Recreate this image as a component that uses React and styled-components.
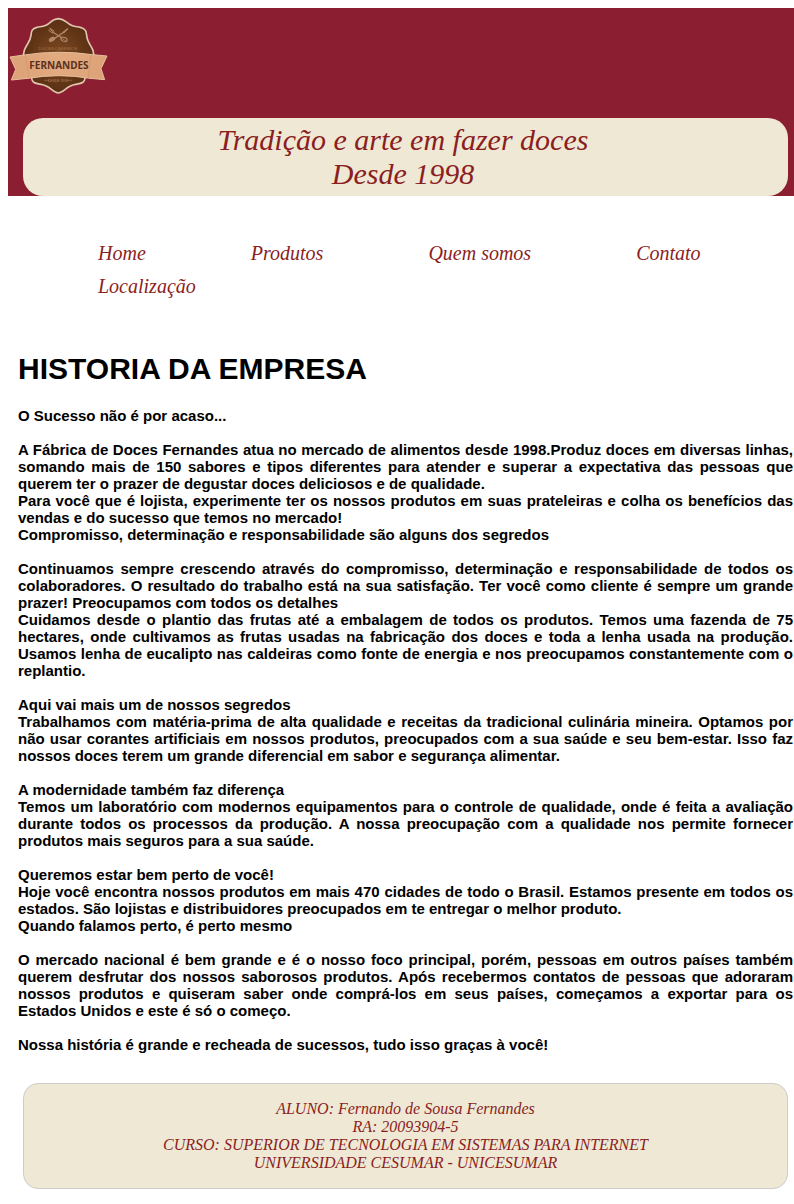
import React from "react";
import styled, { createGlobalStyle } from "styled-components";

const GlobalStyle = createGlobalStyle`
  body {
    margin: 8px 0 15px 8px;
    background: #ffffff;
    color: #000000;
    font-family: Arial, "Liberation Sans", sans-serif;
  }
`;

const serif = `"Times New Roman", "Liberation Serif", serif`;

const Header = styled.header`
  background: #8b1e30;
`;

const LogoImage = styled.svg`
  display: block;
  width: 100px;
  height: 100px;
  margin-bottom: 10px;
`;

const Tagline = styled.p`
  margin: 0 6px 0 15px;
  padding: 5px 10px 5px 5px;
  border-radius: 20px;
  background: #efe8d5;
  color: #8b1e1e;
  font: italic 30px/34px ${serif};
  text-align: center;
`;

const Menu = styled.nav`
  display: flex;
  flex-wrap: wrap;
  column-gap: 105px;
  padding: 41px 0 49px 90px;
`;

const MenuLink = styled.a`
  color: #8b1e1e;
  font: italic 20px/33px ${serif};
  text-decoration: none;
`;

const Main = styled.main`
  margin: 0 1px 30px 10px;
`;

const Title = styled.h1`
  margin: 0 0 21px;
  font-size: 30px;
  line-height: 34px;
`;

const Block = styled.p`
  margin: 0 0 17px;
  font-size: 15px;
  font-weight: bold;
  line-height: 17px;
  text-align: justify;
  white-space: pre-line;

  &:last-child {
    margin-bottom: 0;
  }
`;

const Footer = styled.footer`
  margin: 0 6px 0 15px;
  padding: 16px;
  border: 1px solid #cccccc;
  border-radius: 15px;
  background: #efe8d5;
  color: #8b1e1e;
  font: italic 16px/18px ${serif};
  text-align: center;
  white-space: pre-line;
`;

const links = ["Home", "Produtos", "Quem somos", "Contato", "Localização"];

const story = [
  `O Sucesso não é por acaso...`,
  `A Fábrica de Doces Fernandes atua no mercado de alimentos desde 1998.Produz doces em diversas linhas, somando mais de 150 sabores e tipos diferentes para atender e superar a expectativa das pessoas que querem ter o prazer de degustar doces deliciosos e de qualidade.
Para você que é lojista, experimente ter os nossos produtos em suas prateleiras e colha os benefícios das vendas e do sucesso que temos no mercado!
Compromisso, determinação e responsabilidade são alguns dos segredos`,
  `Continuamos sempre crescendo através do compromisso, determinação e responsabilidade de todos os colaboradores. O resultado do trabalho está na sua satisfação. Ter você como cliente é sempre um grande prazer! Preocupamos com todos os detalhes
Cuidamos desde o plantio das frutas até a embalagem de todos os produtos. Temos uma fazenda de 75 hectares, onde cultivamos as frutas usadas na fabricação dos doces e toda a lenha usada na produção. Usamos lenha de eucalipto nas caldeiras como fonte de energia e nos preocupamos constantemente com o replantio.`,
  `Aqui vai mais um de nossos segredos
Trabalhamos com matéria-prima de alta qualidade e receitas da tradicional culinária mineira. Optamos por não usar corantes artificiais em nossos produtos, preocupados com a sua saúde e seu bem-estar. Isso faz nossos doces terem um grande diferencial em sabor e segurança alimentar.`,
  `A modernidade também faz diferença
Temos um laboratório com modernos equipamentos para o controle de qualidade, onde é feita a avaliação durante todos os processos da produção. A nossa preocupação com a qualidade nos permite fornecer produtos mais seguros para a sua saúde.`,
  `Queremos estar bem perto de você!
Hoje você encontra nossos produtos em mais 470 cidades de todo o Brasil. Estamos presente em todos os estados. São lojistas e distribuidores preocupados em te entregar o melhor produto.
Quando falamos perto, é perto mesmo`,
  `O mercado nacional é bem grande e é o nosso foco principal, porém, pessoas em outros países também querem desfrutar dos nossos saborosos produtos. Após recebermos contatos de pessoas que adoraram nossos produtos e quiseram saber onde comprá-los em seus países, começamos a exportar para os Estados Unidos e este é só o começo.`,
  `Nossa história é grande e recheada de sucessos, tudo isso graças à você!`,
];

const credits = `ALUNO: Fernando de Sousa Fernandes
RA: 20093904-5
CURSO: SUPERIOR DE TECNOLOGIA EM SISTEMAS PARA INTERNET
UNIVERSIDADE CESUMAR - UNICESUMAR`;

function Logo() {
  return (
    <LogoImage viewBox="24 24 300 300" role="img" aria-label="Doces Caseiros Fernandes">
      <defs>
        <radialGradient id="chocolate">
          <stop offset="0" stopColor="#7d4a22" />
          <stop offset="1" stopColor="#592f14" />
        </radialGradient>
        <linearGradient id="ribbon" x1="0" x2="1">
          <stop offset="0" stopColor="#dda277" />
          <stop offset="0.5" stopColor="#e2aa80" />
          <stop offset="1" stopColor="#dda277" />
        </linearGradient>
        <filter id="soft">
          <feGaussianBlur stdDeviation="1" />
        </filter>
      </defs>
      <g filter="url(#soft)">
        <path
          d="M175 56 C160 57 155 63 147 70 C136 80 124 79 111 82 C94 86 94 96 93 106 C91 126 78 135 73 151 L67 180 L94 228 C95 248 103 250 123 253 C151 257 158 278 175 279 C192 278 199 257 227 253 C247 250 255 248 256 228 L284 180 L279 151 C273 135 261 126 260 106 C259 96 258 86 241 82 C227 79 216 80 205 70 C195 63 190 57 175 56 Z"
          fill="url(#chocolate)"
          stroke="#e0c4ac"
          strokeWidth="5"
        />
        <g stroke="#b08a69" strokeWidth="4" strokeLinecap="round" fill="none">
          <path d="M158 96 L186 114" />
          <path d="M192 96 L163 116" />
          <path d="M149 87 L160 96 M146 91 L157 99 M150 85 L162 93" strokeWidth="3" />
          <path d="M191 97 L202 87" strokeWidth="5" />
          <ellipse cx="192" cy="118" rx="10" ry="6" transform="rotate(25 192 118)" strokeWidth="3" />
          <path d="M185 115 L198 123" strokeWidth="2" />
          <ellipse cx="156" cy="118" rx="10" ry="6" transform="rotate(-30 156 118)" fill="#b08a69" strokeWidth="1" />
        </g>
        <text x="174" y="151" textAnchor="middle" fontFamily="'Liberation Sans', sans-serif" fontSize="13" fill="#a06f48">
          DOCES CASEIROS
        </text>
        <path
          d="M30 171 L72 165 Q175 149 278 164 L321 168 L303 206 L314 239 L270 235 Q177 219 84 235 L34 240 L47 208 Z"
          fill="url(#ribbon)"
          stroke="#e6c09c"
          strokeWidth="3"
        />
        <path d="M77 166 L86 233 M273 165 L265 233" stroke="#cd936a" strokeWidth="2" />
        <g stroke="#9b6a45" strokeWidth="2">
          <path d="M132 241 H147 M202 241 H217" />
        </g>
        <text x="174" y="246" textAnchor="middle" fontFamily="'Liberation Sans', sans-serif" fontSize="10" fill="#b5845c">
          DESDE 1998
        </text>
      </g>
      <text
        x="177"
        y="206"
        textAnchor="middle"
        fontFamily="'Noto Sans', 'Open Sans', sans-serif"
        fontSize="30"
        fontWeight="700"
        fill="#5b301c"
      >
        FERNANDES
      </text>
    </LogoImage>
  );
}

export default function App() {
  return (
    <>
      <GlobalStyle />
      <Header>
        <Logo />
        <Tagline>
          Tradição e arte em fazer doces
          <br />
          Desde 1998
        </Tagline>
      </Header>
      <Menu>
        {links.map((label) => (
          <MenuLink key={label} href="#">
            {label}
          </MenuLink>
        ))}
      </Menu>
      <Main>
        <Title>HISTORIA DA EMPRESA</Title>
        {story.map((text) => (
          <Block key={text}>{text}</Block>
        ))}
      </Main>
      <Footer>{credits}</Footer>
    </>
  );
}
